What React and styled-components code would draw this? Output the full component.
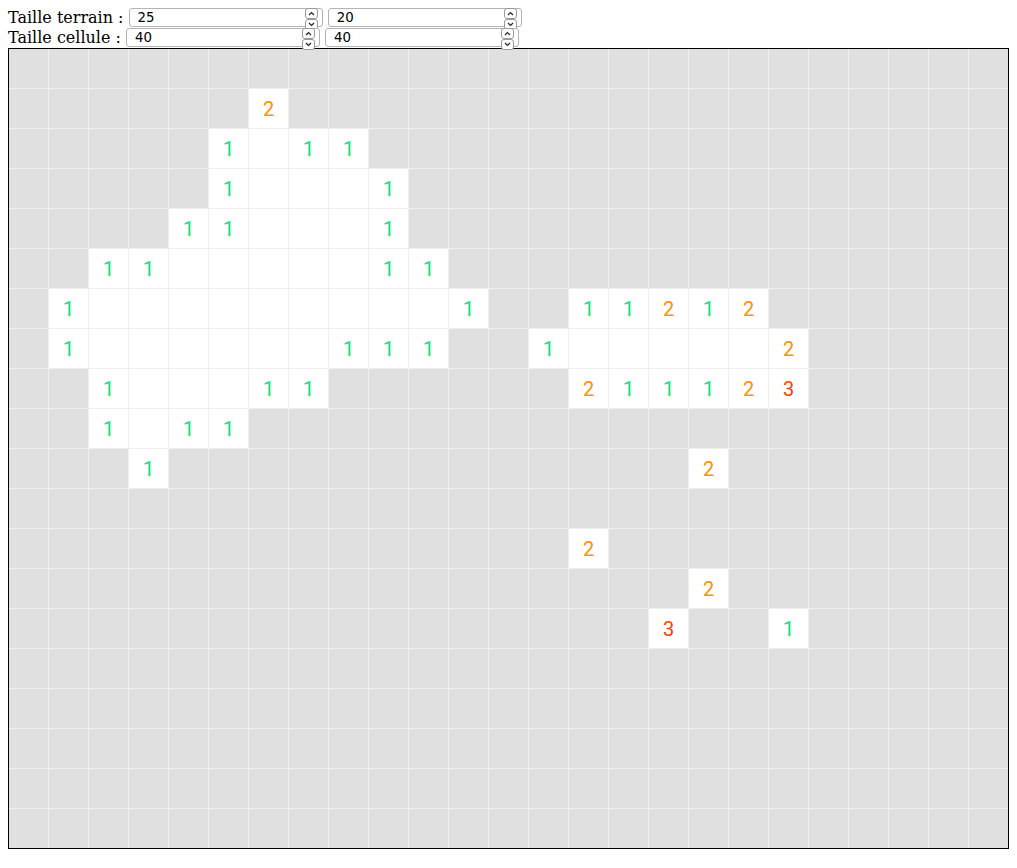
import React, { useState } from 'react';
import styled, { createGlobalStyle } from 'styled-components';

const GlobalStyle = createGlobalStyle`
  body {
    margin: 8px;
    font-family: "DejaVu Serif", serif;
    font-size: 16px;
    background: #fff;
    color: #000;
  }
`;

const BOARD = [
  '#########################',
  '######2##################',
  '#####1.11################',
  '#####1...1###############',
  '####11...1###############',
  '##11.....11##############',
  '#1.........1##11212######',
  '#1......111##1.....2#####',
  '##1...11######211123#####',
  '##1.11###################',
  '###1#############2#######',
  '#########################',
  '##############2##########',
  '#################2#######',
  '################3##1#####',
  '#########################',
  '#########################',
  '#########################',
  '#########################',
  '#########################',
];

const numberColors = {
  1: '#00e676',
  2: '#ff9100',
  3: '#ff3d00',
};

const Controls = styled.div`
  line-height: 20px;
`;

const Row = styled.div`
  height: 20px;
  white-space: nowrap;
`;

const Field = styled.span`
  position: relative;
  display: inline-block;
  vertical-align: top;
  height: 20px;
`;

const NumberInput = styled.input`
  width: 194px;
  height: 19px;
  box-sizing: border-box;
  font-family: "DejaVu Sans", sans-serif;
  font-size: 13.33px;
  padding: 1px 8px;
  border: 1px solid #b4b4b4;
  border-radius: 3px;
  vertical-align: top;
  margin: 0;
  outline: none;

  &::-webkit-inner-spin-button,
  &::-webkit-outer-spin-button {
    -webkit-appearance: none;
    margin: 0;
  }
  -moz-appearance: textfield;
`;

const Spinner = styled.span`
  position: absolute;
  right: 5px;
  top: 0;
  display: flex;
  flex-direction: column;
  gap: 0;
`;

const SpinButton = styled.button`
  width: 13px;
  height: 11px;
  padding: 0;
  margin: 0;
  border: 1px solid #9a9a9a;
  border-radius: 3px;
  background: #fff;
  display: flex;
  align-items: center;
  justify-content: center;
  cursor: default;
`;

const Board = styled.div`
  display: grid;
  grid-template-columns: repeat(${p => p.$cols}, ${p => p.$size - 1}px);
  grid-auto-rows: ${p => p.$size - 1}px;
  gap: 1px;
  width: max-content;
  background: #efefef;
  border: 1px solid #000;
`;

const Cell = styled.div`
  display: flex;
  align-items: center;
  justify-content: center;
  padding-top: 1px;
  box-sizing: border-box;
  background: ${p => (p.$open ? '#ffffff' : '#e0e0e0')};
  color: ${p => numberColors[p.$n] || 'transparent'};
  font-family: Roboto, "Noto Sans", sans-serif;
  font-size: 20px;
  user-select: none;
`;

const Caret = ({ down }) => (
  <svg width="7" height="5" viewBox="0 0 7 5">
    <polyline
      points={down ? '1,1 3.5,3.5 6,1' : '1,4 3.5,1.5 6,4'}
      fill="none"
      stroke="#222"
      strokeWidth="1.2"
    />
  </svg>
);

const NumberField = ({ value, onChange }) => (
  <Field>
    <NumberInput type="number" value={value} onChange={e => onChange(e.target.value)} />
    <Spinner>
      <SpinButton type="button" tabIndex={-1} onClick={() => onChange(Number(value) + 1)}>
        <Caret />
      </SpinButton>
      <SpinButton type="button" tabIndex={-1} onClick={() => onChange(Number(value) - 1)}>
        <Caret down />
      </SpinButton>
    </Spinner>
  </Field>
);

export default function App() {
  const [cols, setCols] = useState(25);
  const [rows, setRows] = useState(20);
  const [size, setSize] = useState(40);
  const [size2, setSize2] = useState(40);

  return (
    <>
      <GlobalStyle />
      <Controls>
        <Row>
          Taille terrain : <NumberField value={cols} onChange={setCols} />{' '}
          <NumberField value={rows} onChange={setRows} />
        </Row>
        <Row>
          Taille cellule : <NumberField value={size} onChange={setSize} />{' '}
          <NumberField value={size2} onChange={setSize2} />
        </Row>
      </Controls>
      <Board $cols={25} $size={40}>
        {BOARD.map((line, r) =>
          line.split('').map((ch, c) => (
            <Cell key={r + '-' + c} $open={ch !== '#'} $n={ch}>
              {/[1-9]/.test(ch) ? ch : ''}
            </Cell>
          ))
        )}
      </Board>
    </>
  );
}
